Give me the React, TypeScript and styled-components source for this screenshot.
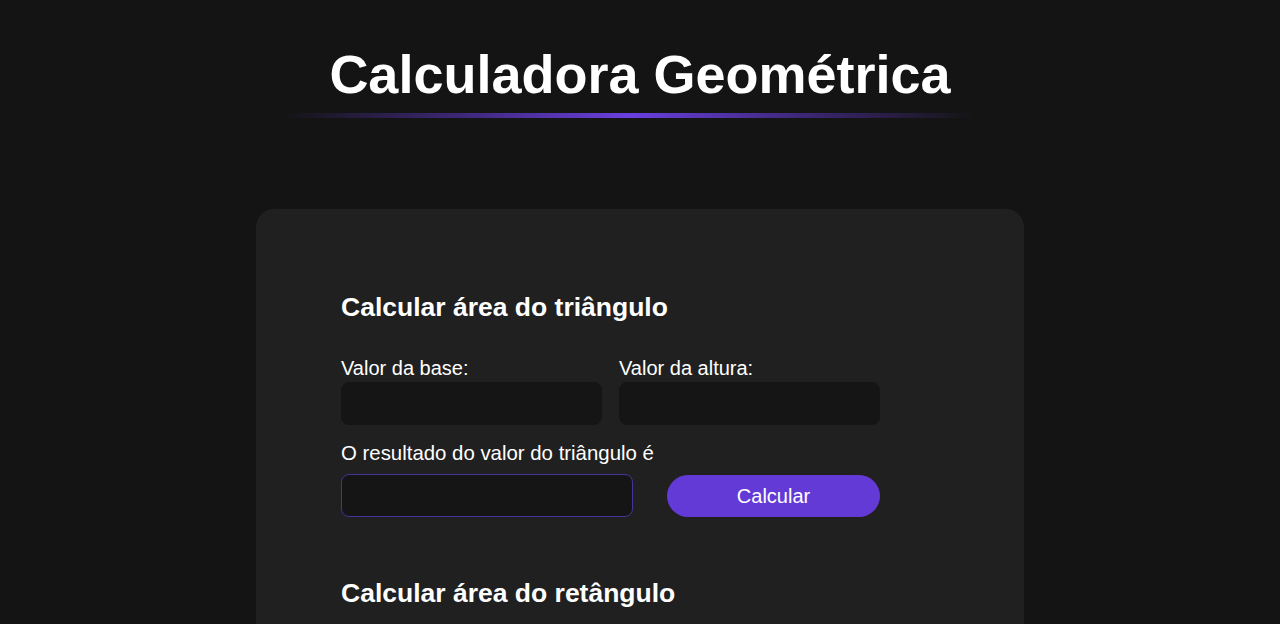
import React from "react";
import styled, { createGlobalStyle } from "styled-components";

const GlobalStyle = createGlobalStyle`
  * { box-sizing: border-box; }
  body {
    margin: 0;
    background: #141414;
    color: #ffffff;
    font-family: "Liberation Sans", Arial, sans-serif;
  }
`;

const Page = styled.div`
  display: flex;
  flex-direction: column;
  align-items: center;
  height: 624px;
  overflow: hidden;
`;

const Header = styled.header`
  display: flex;
  flex-direction: column;
  align-items: center;
  padding-top: 43px;
`;

const Title = styled.h1`
  margin: 0;
  font-size: 54px;
  font-weight: 700;
  line-height: 62px;
`;

const Glow = styled.div`
  width: 690px;
  height: 5px;
  margin-top: 8px;
  margin-right: 20px;
  border-radius: 3px;
  background: linear-gradient(
    90deg,
    rgba(100, 58, 214, 0) 0%,
    rgba(100, 58, 214, 0.5) 25%,
    #6a3fe0 50%,
    rgba(100, 58, 214, 0.5) 75%,
    rgba(100, 58, 214, 0) 100%
  );
`;

const Card = styled.main`
  width: 768px;
  margin-top: 91px;
  background: #202020;
  border-radius: 18px;
  padding: 83px 85px 40px;
  display: flex;
  flex-direction: column;
  gap: 61px;
  flex-shrink: 0;
`;

const Section = styled.section`
  width: 539px;
  display: flex;
  flex-direction: column;
`;

const Heading = styled.h2`
  margin: 0 0 34px;
  font-size: 26.5px;
  font-weight: 700;
  line-height: 31px;
`;

const Row = styled.div<{ $cols: string; $gap: number }>`
  display: grid;
  grid-template-columns: ${(p) => p.$cols};
  column-gap: ${(p) => p.$gap}px;
  align-items: end;
`;

const Field = styled.label`
  display: flex;
  flex-direction: column;
  font-size: 20px;
  line-height: 23px;
`;

const Input = styled.input<{ $accent?: boolean; $gapTop: number }>`
  height: 43px;
  margin-top: ${(p) => p.$gapTop}px;
  background: #151515;
  border: 1px solid ${(p) => (p.$accent ? "#45349a" : "#151515")};
  border-radius: 8px;
  color: #ffffff;
  font-size: 20px;
  padding: 0 12px;
  outline: none;
  font-family: inherit;
`;

const ResultLabel = styled.div`
  margin-top: 17px;
  font-size: 20.4px;
  line-height: 23px;
`;

const Button = styled.button`
  height: 42px;
  margin-top: 9px;
  border: none;
  border-radius: 21px;
  background: #643ad6;
  color: #ffffff;
  font-size: 20px;
  font-family: inherit;
  cursor: pointer;
`;

const ResultRow = styled.div`
  display: grid;
  grid-template-columns: 292px 213px;
  column-gap: 34px;
  align-items: end;
`;

function Shape({ title, a, b, result }: { title: string; a: string; b: string; result: string }) {
  return (
    <Section>
      <Heading>{title}</Heading>
      <Row $cols="261px 261px" $gap={17}>
        <Field>
          {a}
          <Input type="text" $gapTop={2} />
        </Field>
        <Field>
          {b}
          <Input type="text" $gapTop={2} />
        </Field>
      </Row>
      <ResultLabel>{result}</ResultLabel>
      <ResultRow>
        <Input type="text" $accent $gapTop={9} />
        <Button>Calcular</Button>
      </ResultRow>
    </Section>
  );
}

export default function App() {
  return (
    <Page>
      <GlobalStyle />
      <Header>
        <Title>Calculadora Geométrica</Title>
        <Glow />
      </Header>
      <Card>
        <Shape
          title="Calcular área do triângulo"
          a="Valor da base:"
          b="Valor da altura:"
          result="O resultado do valor do triângulo é"
        />
        <Shape
          title="Calcular área do retângulo"
          a="Valor da base:"
          b="Valor da altura:"
          result="O resultado do valor do retângulo é"
        />
      </Card>
    </Page>
  );
}
